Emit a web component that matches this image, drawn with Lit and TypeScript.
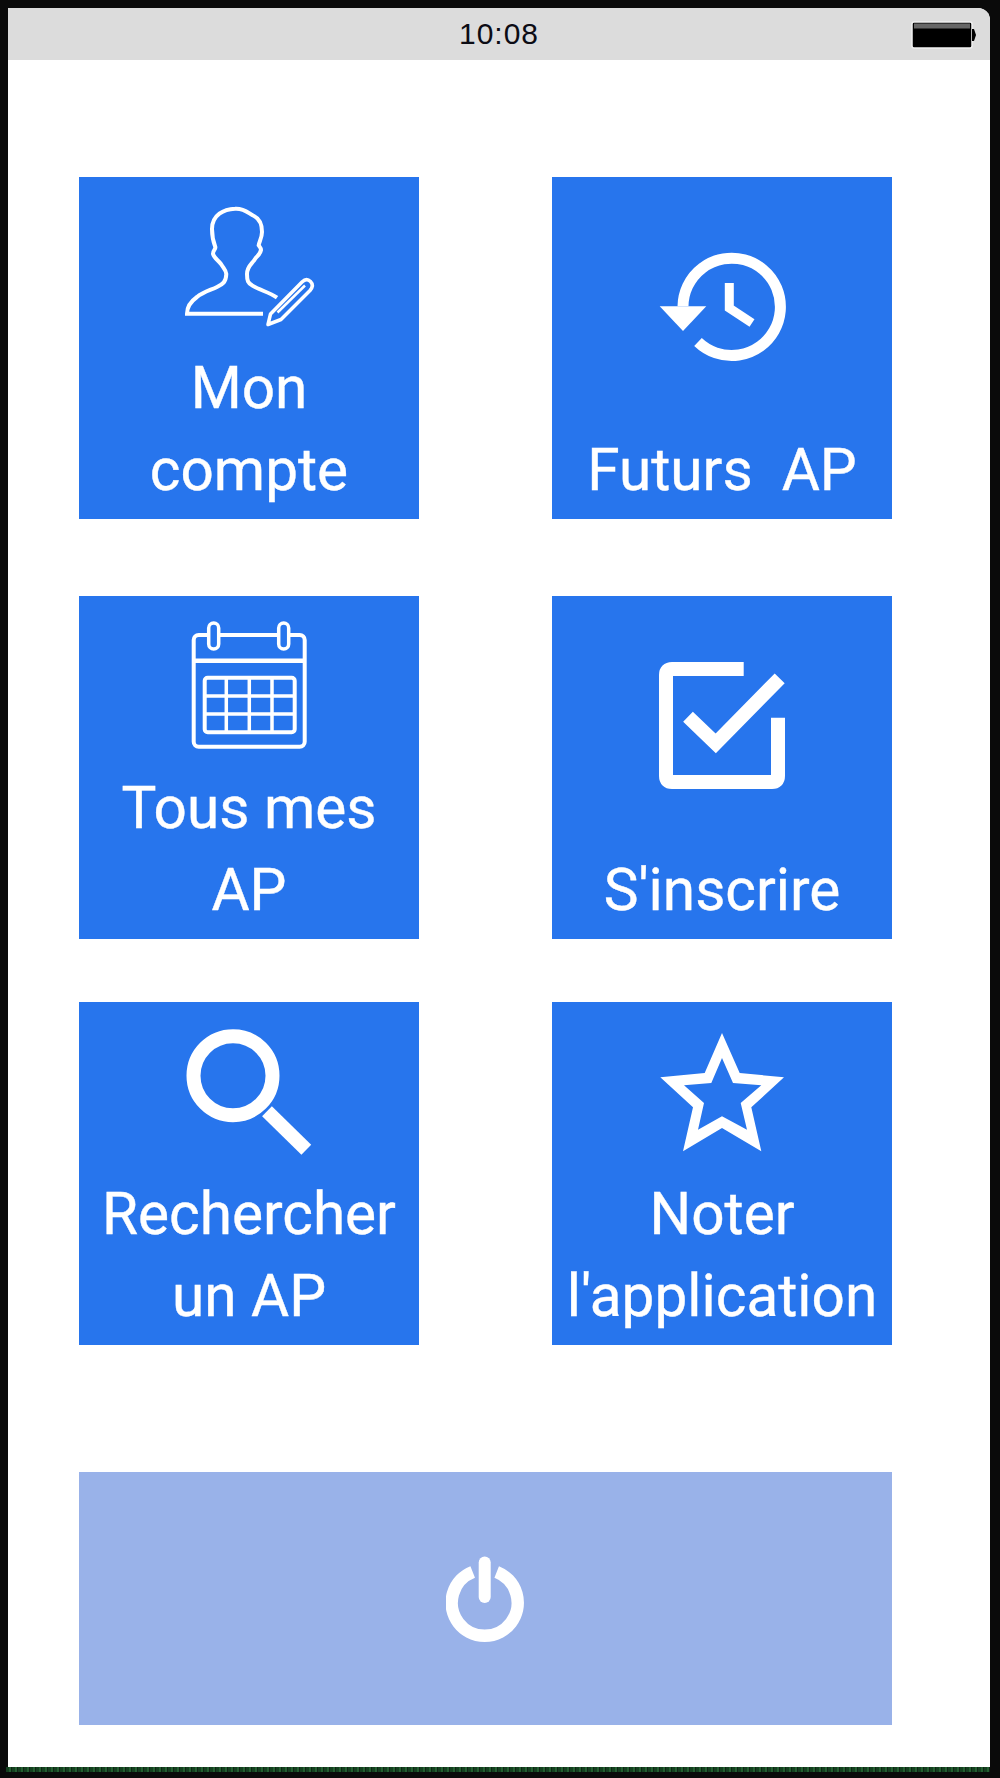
import { LitElement, html, svg, css } from "lit";
import { customElement } from "lit/decorators.js";

// icons are drawn in tile coordinates, so the viewBox is the top of a 340 wide tile
const person = svg`
  <path class="line" stroke-width="4" d="M184 136.7H108C108 130 111 125 118 120C124 115 132 113 138 110C144 107 147 105 147.3 97C147 93 145 92 142 87C139 83 135 81 134 76.7C134 73 137 72 136.3 70C134 64 133 60 133 52C133 38 145 32 156 31.7C166 31 170 37 175 39C181 42 183 48 183 55C183 61 180 65 179.7 68.3C181 70 182 71 182 73C181 78 178 79 176 82C173 87 168 89 168 97C168 104 169 106 173 108.3C180 113 190 115 198 120.7"/>
  <path class="line" stroke-width="3.5" stroke-linejoin="round" d="M189 147.5L191.5 137L223 105C226 102 229 102 231.5 104.5C234 107 234 110 231 113.5L202 142.5Z"/>
  <path class="line" stroke-width="2.5" d="M198.5 135.5L226 108.5"/>
`;

const history = svg`
  <path class="line" stroke-width="11" d="M131 129.3A48.7 48.7 0 1 1 146 165"/>
  <path class="solid" d="M107.7 129.3H154.3L131 154Z"/>
  <path class="line" stroke-width="9" d="M177.3 106V131L200 146"/>
`;

const calendar = svg`
  <rect class="line" stroke-width="4" x="114.7" y="39" width="111" height="111.7" rx="5"/>
  <path class="line" stroke-width="4.5" d="M114.7 64.7H225.7"/>
  <rect class="ring" x="129.7" y="27" width="10" height="26" rx="5"/>
  <rect class="ring" x="199.7" y="27" width="10" height="26" rx="5"/>
  <rect class="line" stroke-width="4" x="125.7" y="81.7" width="90" height="54.6" rx="3"/>
  <path class="line" stroke-width="3.5" d="M147.3 81.7V136.3M170.3 81.7V136.3M193 81.7V136.3M125.7 100H215.7M125.7 118H215.7"/>
`;

const check = svg`
  <path class="line" stroke-width="14" d="M191.7 73H120Q114 73 114 79V180Q114 186 120 186H220Q226 186 226 180V121.7"/>
  <path class="line" stroke-width="14" d="M136 120.7L163.7 147.3L227.7 82.3"/>
`;

const search = svg`
  <circle class="line" stroke-width="14" cx="154" cy="73.7" r="39.5"/>
  <path class="line" stroke-width="14" d="M188 109.3L227.3 147.7"/>
`;

const star = svg`
  <path class="solid" fill-rule="evenodd" d="M170 31L187.7 71L232 75.3L199.3 105.3L209.3 149.3L170 126L131 149.3L141 105.3L108.3 75.3L152.7 71ZM170 56L159.3 81L132 83.3L152 101L146 127.7L170 114.3L195 127.7L188.7 101L209.3 83.3L181 81Z"/>
`;

const rows = [
  [
    { icon: person, lines: ["Mon", "compte"] },
    { icon: history, lines: ["Futurs\u00a0\u00a0AP"] },
  ],
  [
    { icon: calendar, lines: ["Tous mes", "AP"] },
    { icon: check, lines: ["S'inscrire"] },
  ],
  [
    { icon: search, lines: ["Rechercher", "un AP"] },
    { icon: star, lines: ["Noter", "l'application"] },
  ],
];

@customElement("app-root")
export class AppRoot extends LitElement {
  static styles = css`
    :host {
      display: block;
      width: 1000px;
      height: 1778px;
      background: #0a0a0a;
      padding: 8px 10px 11px 8px;
      box-sizing: border-box;
      position: relative;
      overflow: hidden;
    }
    .screen {
      height: 100%;
      background: #fff;
      border-top-right-radius: 12px;
      overflow: hidden;
      display: flex;
      flex-direction: column;
    }
    .status {
      flex: none;
      height: 52px;
      background: #dcdcdc;
      display: flex;
      align-items: center;
      justify-content: center;
      position: relative;
      color: #0c0c14;
      font: 30px/52px "Liberation Sans", Arial, sans-serif;
      letter-spacing: 1px;
    }
    .battery {
      position: absolute;
      right: 13px;
      top: 13px;
    }
    .rows {
      flex: none;
      margin: 117px 0 0 71px;
    }
    .row {
      display: flex;
      gap: 133px;
    }
    .row + .row {
      margin-top: 77px;
    }
    .row:last-child {
      margin-top: 63px;
    }
    .tile {
      width: 340px;
      height: 342px;
      background: #2775ed;
      color: #fff;
      display: grid;
      font: 58.5px/82px Roboto, "Liberation Sans", sans-serif;
      -webkit-text-stroke: 0.4px #fff;
      text-align: center;
    }
    .row + .row .tile {
      height: 343px;
    }
    .tile svg {
      grid-area: 1 / 1;
      width: 340px;
      height: 200px;
    }
    .tile .line {
      fill: none;
      stroke: #fff;
    }
    .tile .solid {
      fill: #fff;
    }
    .tile .ring {
      fill: #2775ed;
      stroke: #fff;
      stroke-width: 3.5;
    }
    .label {
      grid-area: 1 / 1;
      align-self: end;
      padding-bottom: 8px;
      white-space: nowrap;
    }
    .logout {
      flex: none;
      width: 813px;
      height: 253px;
      margin: 127px 0 0 71px;
      background: #99b2e9;
      display: flex;
      align-items: center;
      justify-content: center;
    }
    .logout svg {
      width: 80px;
      height: 90px;
    }
    .noise {
      position: absolute;
      left: 6px;
      right: 10px;
      bottom: 6px;
      height: 5px;
      background: repeating-linear-gradient(90deg, #14401f 0 3px, #235e30 3px 5px, #0f2414 5px 6px);
    }
  `;

  render() {
    return html`
      <div class="screen">
        <div class="status">
          10:08
          <svg class="battery" width="66" height="28" viewBox="0 0 66 28">
            <rect x="1" y="1" width="60" height="26" rx="2" fill="#000" stroke="#f0f0f0" stroke-width="1.5"/>
            <rect x="3" y="2.5" width="56" height="5" fill="#666"/>
            <path d="M61 8h2l2 6l-2 6h-2z" fill="#000"/>
          </svg>
        </div>
        <div class="rows">
          ${rows.map(
            (row) => html`
              <div class="row">
                ${row.map(
                  (t) => html`
                    <div class="tile">
                      <svg viewBox="0 0 340 200">${t.icon}</svg>
                      <div class="label">
                        ${t.lines.map((l) => html`<div>${l}</div>`)}
                      </div>
                    </div>
                  `
                )}
              </div>
            `
          )}
        </div>
        <div class="logout">
          <svg viewBox="0 0 80 90">
            <path d="M26.7 18A33 33 0 1 0 50.7 18" fill="none" stroke="#fff" stroke-width="12.5"/>
            <path d="M38.7 8.5V43" stroke="#fff" stroke-width="12" stroke-linecap="round" fill="none"/>
          </svg>
        </div>
      </div>
      <div class="noise"></div>
    `;
  }
}
